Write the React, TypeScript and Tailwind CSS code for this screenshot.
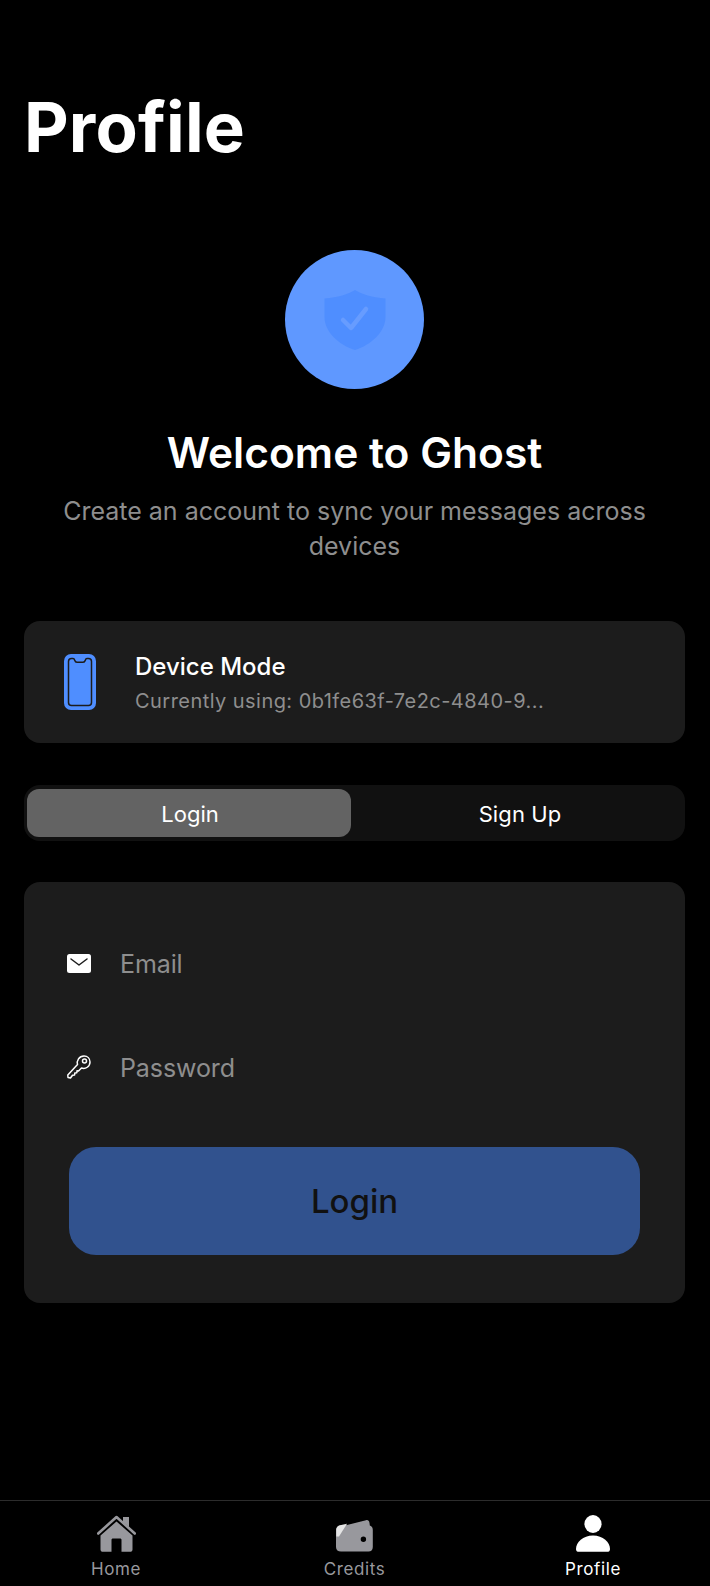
import type { ReactNode } from "react";

function ShieldIcon() {
  return (
    <svg width="62" height="60" viewBox="0 0 62 60" fill="none">
      <path
        d="M31 0C24 4 14 7.500 0.500 8.500V27C0.500 42 15 55 31 60C47 55 61.500 42 61.500 27V8.500C48 7.500 38 4 31 0Z"
        fill="#4f8eff"
      />
      <path d="M19 30L27 38L42 19" stroke="#679cff" strokeWidth="4.500" strokeLinecap="round" strokeLinejoin="round" />
    </svg>
  );
}

function PhoneIcon() {
  return (
    <svg width="32" height="56" viewBox="0 0 32 56" fill="none">
      <rect width="32" height="56" rx="7" fill="#4f8eff" />
      <path
        d="M7.500 4.500H9C10 4.500 10.400 5.200 10.700 6.200C11.100 7.600 12 8.200 13 8.200H19C20 8.200 20.900 7.600 21.300 6.200C21.600 5.200 22 4.500 23 4.500H24.500C26.300 4.500 27.500 5.700 27.500 7.500V48.500C27.500 50.300 26.300 51.500 24.500 51.500H7.500C5.700 51.500 4.500 50.300 4.500 48.500V7.500C4.500 5.700 5.700 4.500 7.500 4.500Z"
        stroke="#1c1c1c"
        strokeWidth="1.500"
      />
    </svg>
  );
}

function MailIcon() {
  return (
    <svg width="24" height="19" viewBox="0 0 24 19" fill="none">
      <rect width="24" height="19" rx="2.500" fill="white" />
      <path d="M4 5L12 11L20 5" stroke="#1c1c1c" strokeWidth="1.500" strokeLinecap="round" strokeLinejoin="round" />
    </svg>
  );
}

function KeyIcon() {
  return (
    <svg width="24" height="24" viewBox="0 0 24 24" fill="none" stroke="white" strokeWidth="1.500" strokeLinejoin="round">
      <path d="M10.500 9.500C9.500 6 12 1 17 1C20.500 1 23 3.500 23 7C23 11.500 18.500 14.500 14.500 13L11.500 16L10 15.800L9.800 17.800L7.800 18L7.600 20L5.500 20.200L3.500 23L1 22.500L0.800 20Z" />
      <circle cx="17.500" cy="6" r="2" />
    </svg>
  );
}

function HomeIcon() {
  return (
    <svg width="39" height="37" viewBox="0 0 39 37" fill="#98989d">
      <path d="M26 2H32V12L26 7Z" />
      <path d="M1.200 18.500L19.500 2L37.800 18.500" fill="none" stroke="#98989d" strokeWidth="2.600" strokeLinecap="round" strokeLinejoin="round" />
      <path d="M19.500 6.500L35.500 20.500V34.500C35.500 36 34.500 36.800 33 36.800H24.500V25C24.500 24 24 23.500 23 23.500H16C15 23.500 14.500 24 14.500 25V36.800H6C4.500 36.800 3.500 36 3.500 34.500V20.500Z" />
    </svg>
  );
}

function WalletIcon() {
  return (
    <svg width="37" height="33" viewBox="0 0 37 33">
      <path d="M3 8L30 1.200C32 0.800 33 1.500 33.500 4L34 8Z" fill="#98989d" />
      <path
        fillRule="evenodd"
        d="M5 6.500H32.500C35.500 6.500 36.800 8 36.800 11V28C36.800 31 35 32.500 32.500 32.500H5C2 32.500 0 31 0 28V11.500C0 8.500 2 6.500 5 6.500ZM24.700 20.300A2.700 2.700 0 1 0 30.100 20.300A2.700 2.700 0 1 0 24.700 20.300Z"
        fill="#98989d"
      />
      <path d="M0.300 10C0.800 8 2 6.800 4 6.200L11 4.800L3 17.500H0.300Z" fill="#e5e5e5" />
    </svg>
  );
}

function PersonIcon() {
  return (
    <svg width="34" height="37" viewBox="0 0 34 37" fill="white">
      <ellipse cx="17" cy="9" rx="8.600" ry="9" />
      <path d="M0 34C0 27 7 20.500 17 20.500C27 20.500 34 27 34 34C34 36 33 36.800 31 36.800H3C1 36.800 0 36 0 34Z" />
    </svg>
  );
}

function FieldRow({ icon, label }: { icon: ReactNode; label: string }) {
  return (
    <div className="flex h-[56px] items-center">
      <div className="-ml-[2px] flex w-[53px] items-center">{icon}</div>
      <span className="relative top-[2px] text-[25px] tracking-[-0.1px] text-[#8e8e8e]">{label}</span>
    </div>
  );
}

function TabItem({ icon, label, active }: { icon: ReactNode; label: string; active?: boolean }) {
  return (
    <div className="flex w-[120px] flex-col items-center">
      <div className="flex h-[38px] items-end justify-center">{icon}</div>
      <span className={`mt-[5px] text-[17px] leading-[24px] tracking-[0.6px] ${active ? "text-white" : "text-[#98989d]"}`}>
        {label}
      </span>
    </div>
  );
}

export default function App() {
  return (
    <div className="flex h-[1586px] w-[710px] flex-col overflow-hidden bg-black font-['Inter',sans-serif] text-white">
      <main className="flex-1 pr-[25px] pl-6">
        <h1 className="pt-[86px] text-[69px] leading-[82px] font-bold tracking-[0.15px]">Profile</h1>

        <div className="mt-[82px] flex flex-col items-center">
          <div className="flex h-[139px] w-[139px] items-center justify-center rounded-full bg-[#5f98ff]">
            <ShieldIcon />
          </div>
          <h2 className="mt-[37px] text-[42.5px] leading-[54px] font-semibold">Welcome to Ghost</h2>
          <p className="mt-[14px] px-6 text-center text-[25px] leading-[35px] text-[#8e8e8e]">
            Create an account to sync your messages across devices
          </p>
        </div>

        <section className="mt-[57px] flex h-[122px] items-center rounded-2xl bg-[#1c1c1c] pl-[40px]">
          <PhoneIcon />
          <div className="mt-[2px] ml-[39px]">
            <p className="text-[24px] leading-[30px] font-medium">Device Mode</p>
            <p className="mt-[6px] text-[20px] leading-[26px] tracking-[0.45px] text-[#8e8e8e]">
              Currently using: 0b1fe63f-7e2c-4840-9...
            </p>
          </div>
        </section>

        <div className="mt-[42px] flex h-[56px] rounded-2xl bg-[#111111] py-1 pl-[3px]">
          <div className="flex w-[324px] items-center justify-center rounded-xl bg-[#636363] pt-[2px] pl-[2px] text-[22px]">
            Login
          </div>
          <div className="ml-1 flex flex-1 items-center justify-center pt-[2px] text-[22px] tracking-[0.1px]">Sign Up</div>
        </div>

        <section className="mt-[41px] rounded-2xl bg-[#1c1c1c] px-[45px] pt-[53px] pb-[48px]">
          <FieldRow icon={<MailIcon />} label="Email" />
          <div className="mt-[48px]">
            <FieldRow icon={<KeyIcon />} label="Password" />
          </div>
          <button
            type="button"
            className="mt-[52px] flex h-[108px] w-full items-center justify-center rounded-[27px] bg-[#31528e] pt-[2px] text-[33px] font-medium text-[#111111]"
          >
            Login
          </button>
        </section>
      </main>

      <nav className="flex h-[86px] justify-between border-t border-[#2c2c2c] pt-[13px] pr-[57px] pl-[56px]">
        <TabItem icon={<HomeIcon />} label="Home" />
        <TabItem icon={<WalletIcon />} label="Credits" />
        <TabItem icon={<PersonIcon />} label="Profile" active />
      </nav>
    </div>
  );
}
